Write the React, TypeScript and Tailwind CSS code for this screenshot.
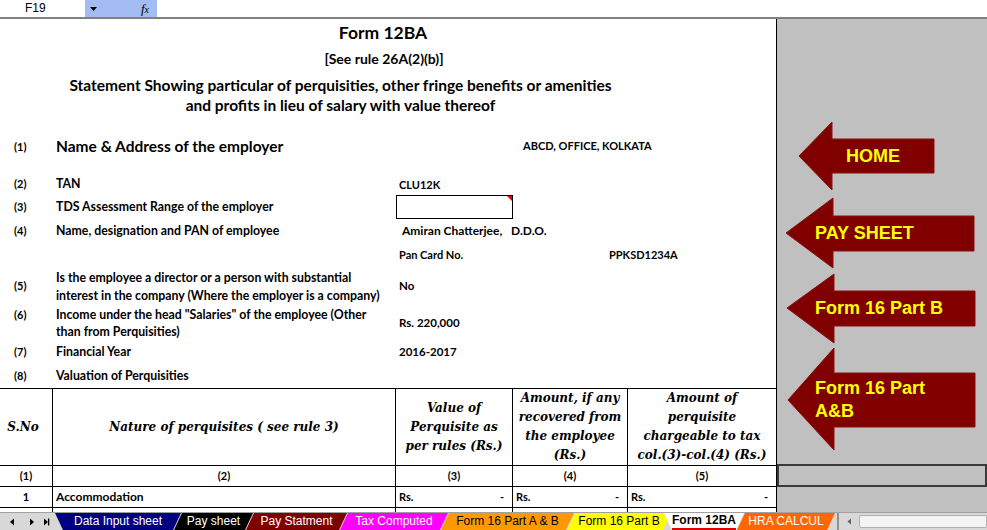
import React from 'react';

// ============================================================================
// Form 12BA worksheet (Excel look)
// ============================================================================

const body = "font-['Lato',sans-serif] font-bold text-[11px] text-black";
const label = 'text-[12.3px]';
const grid = 'grid grid-cols-[53px_343px_117px_115px_148px]';
const head = "font-['DejaVu_Serif',serif] font-bold italic text-[12px] leading-[19px] text-black";

interface InfoRowProps {
  no: string;
  h: string;
  children?: React.ReactNode;
  value?: React.ReactNode;
}

function InfoRow({ no, h, children, value }: InfoRowProps) {
  return (
    <div className={`${grid} ${h} ${body} items-center`}>
      <div className="pl-[14px]">{no}</div>
      <div className={`pl-[3px] ${label}`}>{children}</div>
      <div className="col-span-3 pl-[3px] text-[11.5px]">{value}</div>
    </div>
  );
}

const tabs = [
  { label: 'Data Input sheet', w: 'w-[126px]', cls: 'bg-[#000080] text-white', first: true },
  { label: 'Pay sheet', w: 'w-[79px]', cls: 'bg-black text-white' },
  { label: 'Pay Statment', w: 'w-[101px]', cls: 'bg-[#800000] text-white' },
  { label: 'Tax Computed', w: 'w-[108px]', cls: 'bg-[#ff00ff] text-white' },
  { label: 'Form 16 Part A & B', w: 'w-[133px]', cls: 'bg-[#ff9900] text-black' },
  { label: 'Form 16 Part B', w: 'w-[104px]', cls: 'bg-[#ffff00] text-black' },
  { label: 'Form 12BA', w: 'w-[80px]', cls: 'bg-white text-black font-bold', active: true },
  { label: 'HRA CALCUL', w: 'w-[98px]', cls: 'bg-[#ff6600] text-white' },
];

function NavArrows() {
  return (
    <svg width="55" height="18" viewBox="0 0 55 18" className="shrink-0">
      <polygon points="10,9 14,5.5 14,12.5" fill="#000" />
      <polygon points="30,5.5 34,9 30,12.5" fill="#000" />
      <polygon points="44,5.5 48,9 44,12.5" fill="#000" />
      <rect x="48" y="5.5" width="1.3" height="7" fill="#000" />
    </svg>
  );
}

function RsCell({ last }: { last?: boolean }) {
  return (
    <div className={`${last ? '' : 'border-r border-black'} flex justify-between pl-[3px] pr-[8px]`}>
      <span>Rs.</span>
      <span>-</span>
    </div>
  );
}

export default function App() {
  return (
    <div className="w-[987px] h-[530px] overflow-hidden bg-white flex flex-col">
      {/* ===== FORMULA BAR ===== */}
      <div className="h-[19px] shrink-0 flex border-b-2 border-[#808080] font-['Liberation_Sans',sans-serif] text-[12px]">
        <div className="w-[85px] pl-[25px] leading-[17px]">F19</div>
        <div className="w-[72px] bg-[#a3bdf2] flex items-center justify-between pl-[4px] pr-[8px]">
          <svg width="9" height="6" viewBox="0 0 9 6">
            <polygon points="1,1 8,1 4.5,5" fill="#000" />
          </svg>
          <span className="italic font-['Liberation_Serif',serif] text-[13px] leading-[17px]">
            f<span className="text-[10px]">x</span>
          </span>
        </div>
      </div>

      {/* ===== SHEET ===== */}
      <div className="flex flex-1 min-h-0">
        <div className="w-[777px] shrink-0 border-r border-black flex flex-col">
          <div className={`h-[28px] w-[766px] flex items-center justify-center ${body} text-[17.5px]`}>
            Form 12BA
          </div>
          <div className={`h-[22px] w-[768px] flex items-center justify-center ${body} text-[14px]`}>
            [See rule 26A(2)(b)]
          </div>
          <div className="h-[6px]" />
          <div className={`h-[40px] w-[681px] text-center ${body} text-[15.5px] leading-[20px]`}>
            <div>Statement Showing particular of perquisities, other fringe benefits or amenities</div>
            <div>and profits in lieu of salary with value thereof</div>
          </div>
          <div className="h-[20px]" />

          <div className={`${grid} h-[24px] ${body} items-center`}>
            <div className="pl-[14px]">(1)</div>
            <div className="pl-[3px] text-[15.5px]">Name &amp; Address of the employer</div>
            <div />
            <div className="col-span-2 pl-[10px] -mt-[2px]">ABCD, OFFICE, KOLKATA</div>
          </div>
          <div className="h-[15px]" />
          <InfoRow no="(2)" h="h-[21px]" value={<span className="text-[11px]">CLU12K</span>}>TAN</InfoRow>
          <div className={`${grid} h-[24px] ${body} items-center`}>
            <div className="pl-[14px]">(3)</div>
            <div className={`pl-[3px] ${label}`}>TDS Assessment Range of the employer</div>
            <div className="relative h-[24px] border border-black">
              <div className="absolute top-0 right-0 w-0 h-0 border-t-[5px] border-l-[5px] border-t-[#e00000] border-l-transparent" />
            </div>
          </div>
          <InfoRow
            no="(4)"
            h="h-[24px]"
            value={<span className="pl-[3px] text-[12px]">Amiran Chatterjee,&nbsp;&nbsp; D.D.O.</span>}
          >
            Name, designation and PAN of employee
          </InfoRow>
          <div className={`${grid} h-[24px] ${body} items-center`}>
            <div />
            <div />
            <div className="pl-[3px]">Pan Card No.</div>
            <div className="col-span-2 pl-[96px]">PPKSD1234A</div>
          </div>
          <div className={`${grid} h-[38px] ${body} items-center`}>
            <div className="pl-[14px]">(5)</div>
            <div className={`pl-[3px] ${label} leading-[18px] self-start pt-[2px] whitespace-nowrap`}>
              Is the employee a director or a person with substantial
              <br />
              interest in the company (Where the employer is a company)
            </div>
            <div className="col-span-3 pl-[3px] text-[11.5px]">No</div>
          </div>
          <div className={`${grid} h-[35px] ${body} items-center`}>
            <div className="pl-[14px] self-start pt-[1px] leading-[17px]">(6)</div>
            <div className={`pl-[3px] ${label} leading-[17px] self-start pt-[1px] whitespace-nowrap`}>
              Income under the head "Salaries" of the employee (Other
              <br />
              than from Perquisities)
            </div>
            <div className="col-span-3 pl-[3px] text-[11.5px]">Rs. 220,000</div>
          </div>
          <InfoRow no="(7)" h="h-[24px]" value="2016-2017">Financial Year</InfoRow>
          <InfoRow no="(8)" h="h-[24px]">Valuation of Perquisities</InfoRow>

          {/* ===== TABLE ===== */}
          <div className={`${grid} h-[77px] border-t border-black ${head}`}>
            <div className="border-r border-black flex items-center justify-center pr-[6px]">S.No</div>
            <div className="border-r border-black flex items-center justify-center">
              Nature of perquisites ( see rule 3)
            </div>
            <div className="border-r border-black flex items-center justify-center text-center pt-[1px]">
              Value of
              <br />
              Perquisite as
              <br />
              per rules (Rs.)
            </div>
            <div className="border-r border-black flex items-center justify-center text-center whitespace-nowrap">
              Amount, if any
              <br />
              recovered from
              <br />
              the employee
              <br />
              (Rs.)
            </div>
            <div className="flex items-center justify-center text-center whitespace-nowrap">
              Amount of
              <br />
              perquisite
              <br />
              chargeable to tax
              <br />
              col.(3)-col.(4) (Rs.)
            </div>
          </div>
          <div className={`${grid} h-[21px] border-t border-black ${body} text-center leading-[20px]`}>
            <div className="border-r border-black">(1)</div>
            <div className="border-r border-black">(2)</div>
            <div className="border-r border-black">(3)</div>
            <div className="border-r border-black">(4)</div>
            <div>(5)</div>
          </div>
          <div className={`${grid} h-[21px] border-t border-black ${body} leading-[20px]`}>
            <div className="border-r border-black text-center">1</div>
            <div className="border-r border-black pl-[3px] text-[12px]">Accommodation</div>
            <RsCell />
            <RsCell />
            <RsCell last />
          </div>
          <div className={`${grid} flex-1 border-t border-black`}>
            <div className="border-r border-black" />
            <div className="border-r border-black" />
            <div className="border-r border-black" />
            <div className="border-r border-black" />
            <div />
          </div>
        </div>

        {/* ===== NAVIGATION PANEL ===== */}
        <div className="relative flex-1 bg-[#c0c0c0] font-['Liberation_Sans',sans-serif] font-bold text-[18px] text-[#ffff00]">
          <svg className="absolute inset-0" width="210" height="493" viewBox="0 0 210 493">
            <g fill="#800000" stroke="#8a1010" strokeWidth="1">
              <polygon points="22,137 55,103 55,120 157,120 157,154 55,154 55,171" />
              <polygon points="9,214 56,179 56,197 197,197 197,232 56,232 56,249" />
              <polygon points="10,289 57,255 57,272 198,272 198,307 57,307 57,324" />
              <polygon points="11,381 57,329 57,354 198,354 198,408 57,408 57,431" />
            </g>
          </svg>
          <div className="absolute left-[69px] top-[126px] leading-[22px]">HOME</div>
          <div className="absolute left-[38px] top-[203px] leading-[22px]">PAY SHEET</div>
          <div className="absolute left-[38px] top-[278px] leading-[22px]">Form 16 Part B</div>
          <div className="absolute left-[38px] top-[358px] leading-[23px]">
            Form 16 Part
            <br />
            A&amp;B
          </div>
          <div className="absolute left-0 right-0 top-[445px] h-[23px] border-2 border-[#3a3a3a]" />
        </div>
      </div>

      {/* ===== SHEET TABS ===== */}
      <div className="h-[18px] shrink-0 flex bg-[#d8d8d8] border-t border-[#a0a0a0] font-['Liberation_Sans',sans-serif] text-[12px] leading-[17px]">
        <NavArrows />
        {tabs.map((t) => (
          <div
            key={t.label}
            className={`${t.w} shrink-0 -mr-[7px] flex justify-center ${t.cls} ${
              t.first
                ? '[clip-path:polygon(0_0,100%_0,calc(100%-8px)_100%,8px_100%)]'
                : t.active
                ? 'relative z-10 [clip-path:polygon(0_0,100%_0,calc(100%-8px)_100%,8px_100%)]'
                : '[clip-path:polygon(8px_0,100%_0,calc(100%-8px)_100%,0_100%)]'
            }`}
          >
            <span className={t.active ? 'border-b-2 border-[#e00000] leading-[15px] h-[17px]' : ''}>{t.label}</span>
          </div>
        ))}
        <div className="ml-[9px] w-[2px] h-full border-x border-[#909090]" />
        <div className="w-[20px] flex items-center justify-center">
          <svg width="5" height="7" viewBox="0 0 5 7">
            <polygon points="4,0.5 0.5,3.5 4,6.5" fill="#606060" />
          </svg>
        </div>
        <div className="flex-1 my-[2px] bg-[#f4f4f4] border border-[#b0b0b0] rounded-[2px]" />
      </div>
    </div>
  );
}
